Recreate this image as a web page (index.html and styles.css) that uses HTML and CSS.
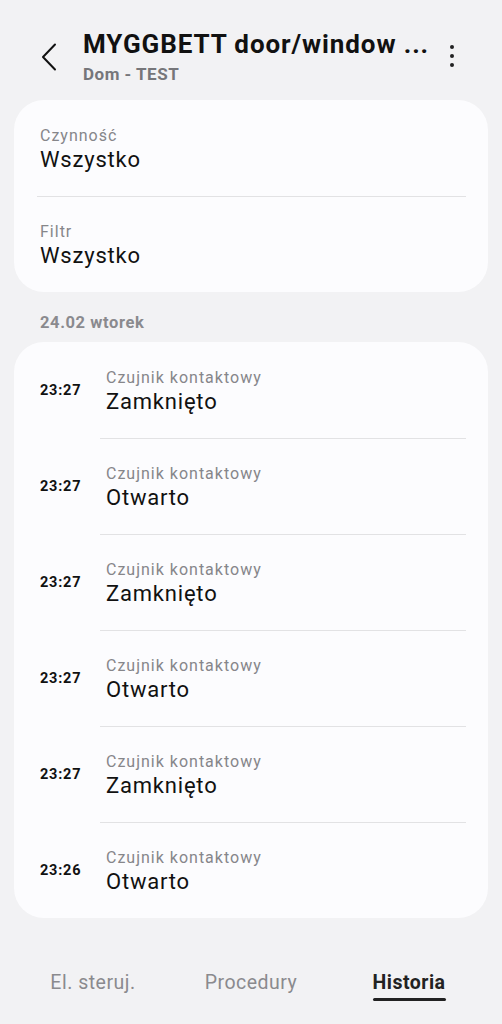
FILE: index.html
```html
<!DOCTYPE html>
<html lang="pl">
<head>
<meta charset="utf-8">
<link rel="stylesheet" href="styles.css">
</head>
<body>
<div class="screen">
  <header class="topbar">
    <div class="back">
      <svg width="16" height="28" viewBox="0 0 16 28"><path d="M14 1.5 L2 14 L14 26.5" fill="none" stroke="#111" stroke-width="2" stroke-linecap="round" stroke-linejoin="round"/></svg>
    </div>
    <div class="titles">
      <div class="title">MYGGBETT door/window ...</div>
      <div class="subtitle">Dom - TEST</div>
    </div>
    <div class="more">
      <span class="dot"></span><span class="dot"></span><span class="dot"></span>
    </div>
  </header>

  <section class="card filters">
    <div class="frow">
      <div class="label">Czynność</div>
      <div class="value">Wszystko</div>
    </div>
    <div class="frow">
      <div class="label">Filtr</div>
      <div class="value">Wszystko</div>
    </div>
  </section>

  <div class="date">24.02 wtorek</div>

  <section class="card history">
    <div class="hrow"><div class="time">23:27</div><div class="body"><div class="label">Czujnik kontaktowy</div><div class="value">Zamknięto</div></div></div>
    <div class="hrow"><div class="time">23:27</div><div class="body"><div class="label">Czujnik kontaktowy</div><div class="value">Otwarto</div></div></div>
    <div class="hrow"><div class="time">23:27</div><div class="body"><div class="label">Czujnik kontaktowy</div><div class="value">Zamknięto</div></div></div>
    <div class="hrow"><div class="time">23:27</div><div class="body"><div class="label">Czujnik kontaktowy</div><div class="value">Otwarto</div></div></div>
    <div class="hrow"><div class="time">23:27</div><div class="body"><div class="label">Czujnik kontaktowy</div><div class="value">Zamknięto</div></div></div>
    <div class="hrow"><div class="time">23:26</div><div class="body"><div class="label">Czujnik kontaktowy</div><div class="value">Otwarto</div></div></div>
  </section>

  <nav class="tabs">
    <div class="tab">El. steruj.</div>
    <div class="tab">Procedury</div>
    <div class="tab active">Historia</div>
  </nav>
</div>
</body>
</html>
```

FILE: styles.css
```css
* { box-sizing: border-box; }
html, body {
  margin: 0;
  padding: 0;
  background: #f2f2f4;
}
body {
  font-family: Roboto, "Noto Sans", Arial, sans-serif;
  color: #111;
}
.screen {
  width: 502px;
  height: 1024px;
  display: flex;
  flex-direction: column;
  padding: 0 14px;
}
.topbar {
  height: 100px;
  display: flex;
  align-items: flex-start;
  padding-top: 29px;
}
.back {
  width: 70px;
  padding-left: 27px;
  padding-top: 14px;
}
.back svg { display: block; }
.titles {
  flex: 1;
  display: flex;
  flex-direction: column;
}
.title {
  font-size: 26px;
  font-weight: 700;
  line-height: 30px;
  color: #111;
  letter-spacing: 0.9px;
  white-space: nowrap;
}
.subtitle {
  font-size: 17px;
  font-weight: 700;
  color: #76767a;
  line-height: 20px;
  letter-spacing: 0.5px;
  margin-top: 5px;
}
.more {
  width: 60px;
  display: flex;
  flex-direction: column;
  align-items: center;
  gap: 5px;
  padding-top: 16px;
  padding-right: 14px;
}
.dot {
  width: 4px;
  height: 4px;
  border-radius: 50%;
  background: #222;
}
.card {
  background: #fcfcfe;
  border-radius: 30px;
}
.filters {
  padding: 0 22px 0 23px;
}
.frow {
  height: 96px;
  display: flex;
  flex-direction: column;
  justify-content: center;
  padding-left: 3px;
  padding-top: 2px;
}
.frow + .frow {
  border-top: 1px solid #e2e2e4;
}
.label {
  font-size: 16px;
  line-height: 20px;
  color: #86868a;
  letter-spacing: 1px;
}
.value {
  font-size: 22px;
  line-height: 27px;
  color: #111;
  letter-spacing: 0.8px;
}
.date {
  height: 50px;
  padding-left: 26px;
  padding-top: 22px;
  font-size: 16.5px;
  font-weight: 700;
  color: #8a8a8e;
  line-height: 18px;
  letter-spacing: 0.6px;
}
.history {
  padding: 0 22px 0 26px;
}
.hrow {
  height: 96px;
  display: flex;
  align-items: center;
}
.time {
  width: 60px;
  font-size: 14.5px;
  font-weight: 700;
  color: #111;
  letter-spacing: 0.8px;
}
.body {
  flex: 1;
  height: 100%;
  display: flex;
  flex-direction: column;
  justify-content: center;
  padding-left: 6px;
  padding-top: 2px;
}
.hrow + .hrow .body {
  border-top: 1px solid #e2e2e4;
}
.tabs {
  margin-top: auto;
  height: 84px;
  display: flex;
  align-items: flex-start;
  padding-top: 29px;
}
.tab {
  flex: 1;
  text-align: center;
  font-size: 19.5px;
  color: #8a8a8e;
  line-height: 28px;
  letter-spacing: 0.5px;
}
.tab.active {
  font-weight: 700;
  color: #222;
}
.tab.active::after {
  content: "";
  display: block;
  width: 73px;
  height: 3px;
  border-radius: 2px;
  background: #222;
  margin: 1px auto 0;
}
```
